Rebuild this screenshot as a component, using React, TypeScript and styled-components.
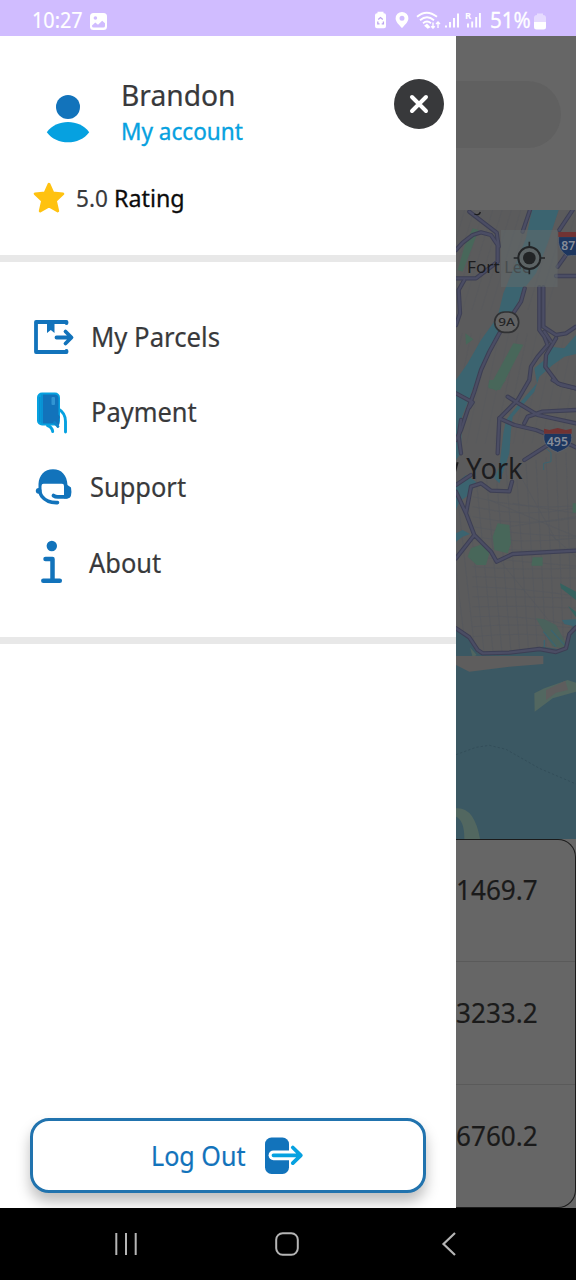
import React from "react";
import styled, { createGlobalStyle } from "styled-components";

const BLUE = "#1273bb";
const SKY = "#06a1e0";
const INK = "#38393b";

const GlobalStyle = createGlobalStyle`
  *, *::before, *::after { box-sizing: border-box; }
  body { margin: 0; background: #000; font-family: "Noto Sans", sans-serif; }
  svg { display: block; flex: none; }
`;

const Screen = styled.div`
  display: flex;
  flex-direction: column;
  width: 576px;
  height: 1280px;
  overflow: hidden;
`;

const StatusBar = styled.header`
  display: flex;
  align-items: center;
  justify-content: space-between;
  height: 36px;
  padding: 6px 30px 0 32px;
  background: #d0bcff;
`;

const StatusGroup = styled.div<{ $gap: number }>`
  display: flex;
  align-items: center;
  gap: ${(p) => p.$gap}px;
  height: 30px;
`;

const Label = styled.span<{
  $size: number;
  $width: number;
  $scale?: number;
  $color?: string;
  $stroke?: number;
}>`
  display: block;
  flex: none;
  width: ${(p) => p.$width}px;
  white-space: nowrap;
  font-size: ${(p) => p.$size}px;
  line-height: 36px;
  color: ${(p) => p.$color ?? INK};
  -webkit-text-stroke: ${(p) => p.$stroke ?? 0.2}px currentColor;
  transform: scaleX(${(p) => p.$scale ?? 1});
  transform-origin: left center;
`;

const StatusText = styled(Label)`
  line-height: 28px;
  padding-bottom: 2px;
`;

const Body = styled.main`
  display: flex;
  height: 1172px;
`;

const Drawer = styled.aside`
  display: flex;
  flex-direction: column;
  width: 456px;
  background: #fff;
  overflow: hidden;
`;

const Profile = styled.section`
  height: 226px;
  border-bottom: 7px solid #e8e8e8;
  padding: 40px 12px 0 33px;
`;

const ProfileTop = styled.div`
  display: flex;
  height: 92px;
`;

const AvatarSlot = styled.div`
  width: 88px;
  padding: 18px 0 0 13px;
`;

const Names = styled.div`
  flex: 1;
  padding-top: 1px;
`;

const CloseButton = styled.button`
  display: grid;
  place-items: center;
  width: 50px;
  height: 50px;
  margin: 3px 0 0;
  padding: 0;
  border: 0;
  border-radius: 50%;
  background: ${INK};
`;

const Rating = styled.div`
  display: flex;
  align-items: center;
  height: 60px;
`;

const Score = styled(Label)`
  margin-left: 11px;
`;

const Menu = styled.nav`
  height: 382px;
  padding: 37px 0 0 33px;
  border-bottom: 7px solid #e8e8e8;
`;

const MenuRow = styled.a<{ $indent: number }>`
  display: grid;
  grid-template-columns: ${(p) => p.$indent}px 1fr;
  align-items: center;
  height: 75.2px;
`;

const MenuLabel = styled(Label)`
  padding-top: 1px;
`;

const Footer = styled.footer`
  margin-top: auto;
  padding: 0 30px 15px;
`;

const LogOutButton = styled.button`
  display: flex;
  align-items: center;
  width: 396px;
  height: 75px;
  padding: 0 0 0 118px;
  border: 3px solid #2173ae;
  border-radius: 19px;
  background: #fff;
  box-shadow: 0 9px 14px rgba(0, 0, 0, 0.26);
  font-family: inherit;
  text-align: left;
`;

const Behind = styled.section`
  display: flex;
  flex-direction: column;
  width: 120px;
  background: #666;
  overflow: hidden;
`;

const SearchArea = styled.div`
  height: 174px;
  padding: 45px 15px 0 0;
`;

const SearchPill = styled.div`
  height: 67px;
  border-radius: 0 34px 34px 0;
  background: #606060;
`;

const MapFrame = styled.div`
  height: 629px;
`;

const Prices = styled.div`
  height: 369px;
  border: 1.5px solid #1b1b1b;
  border-left: 0;
  border-radius: 0 18px 18px 0;
  background: #666;
`;

const PriceRow = styled.div`
  display: flex;
  height: 123px;
  padding-top: 32px;
  &:first-child {
    height: 121px;
  }
  & + & {
    padding-top: 33px;
    border-top: 1px solid #5a5a5a;
  }
`;

const NavBar = styled.footer`
  display: flex;
  align-items: center;
  height: 72px;
  padding: 0 119px 0 114px;
  justify-content: space-between;
  background: #000;
`;

const HomeButton = styled.div`
  padding-right: 6px;
`;

const GalleryIcon = () => (
  <svg width="17" height="17" viewBox="0 0 17 17">
    <rect width="17" height="17" rx="3.5" fill="#fff" />
    <circle cx="5.4" cy="5" r="1.8" fill="#d0bcff" />
    <path d="M2 12.6 5.3 9.5 8 11.7 12.2 7.7 15 10.2V13q0 1.6-1.7 1.6H3.6Q2 14.6 2 13Z" fill="#d0bcff" />
  </svg>
);

const StatusIcons = () => (
  <svg width="110" height="22" viewBox="0 0 110 22">
    <path d="M3.500 3.300V1.800h6v1.500h.5q2 0 2 2v11q0 2-2 2H3q-2 0-2-2v-11q0-2 2-2Z" fill="#fff" />
    <path d="m4.200 9.500 2.300-2 2.300 2M3.800 11.500v2.300h1.700m2.200 0h1.700v-2.300" fill="none" stroke="#bca5ef" strokeWidth="1.300" />
    <path d="M28 2a6.400 6.400 0 0 1 6.400 6.400c0 3.500-4.200 7-6.400 9.700-2.200-2.700-6.400-6.200-6.400-9.700A6.400 6.400 0 0 1 28 2Zm0 3.800a2.500 2.500 0 1 0 0 5 2.500 2.500 0 0 0 0-5Z" fill="#fff" />
    <g fill="none" stroke="#fff" strokeWidth="1.800">
      <path d="M43 6.800q9.500-8.200 20 0" />
      <path d="M46 10.200q7-6 14 0" />
      <path d="M49 13.200q4-3.300 8 0" />
    </g>
    <path d="m53 13.500 3.500 3.800-2.800 1.500-3.600-3Z" fill="#fff" />
    <path d="M59 12.500v5.500m-1.800-1.800 1.800 1.800 1.800-1.800M64 18v-6m-2 2 2-2 2 2" fill="none" stroke="#fff" strokeWidth="1.400" />
    <path d="M72 17.500v-2m4 2V12m4 5.500V8m4 9.500V3.500" fill="none" stroke="#fff" strokeWidth="2" />
    <text x="91" y="8.800" fontSize="9.500" fontWeight="700" fill="#fff">R</text>
    <path d="M94 17.500v-4m4.200 4v-6m4 6V7m3.700 10.500V3" fill="none" stroke="#fff" strokeWidth="1.900" />
  </svg>
);

const BatteryIcon = () => (
  <svg width="12" height="17" viewBox="0 0 12 17">
    <path d="M3 2V.500h6V2q3 0 3 3v4H0V5q0-3 3-3Z" fill="#e6dbff" />
    <path d="M0 9h12v5q0 2.500-2.500 2.500h-7Q0 16.500 0 14Z" fill="#fff" />
  </svg>
);

const AvatarIcon = () => (
  <svg width="44" height="50" viewBox="0 0 44 50">
    <circle cx="22" cy="12.900" r="12" fill={BLUE} />
    <path d="M.8 38.200C10.500 24.700 33.500 24.700 43.200 38.200 33.500 51.700 10.500 51.700.8 38.200Z" fill={SKY} />
  </svg>
);

const CrossIcon = () => (
  <svg width="20" height="20" viewBox="0 0 20 20">
    <path d="m3 3 14 14M17 3 3 17" stroke="#fff" strokeWidth="4" strokeLinecap="round" />
  </svg>
);

const StarIcon = () => (
  <svg width="32" height="32" viewBox="0 0 32 32">
    <path
      d="m16 2.200 3.900 8.600 10 1-7.400 7 2.300 10.200L16 24l-8.800 5 2.300-10.200-7.400-7 10-1Z"
      fill="#ffc210"
      stroke="#ffc210"
      strokeWidth="2.800"
      strokeLinejoin="round"
    />
  </svg>
);

const ParcelIcon = () => (
  <svg width="42" height="36" viewBox="0 0 42 36">
    <g fill="none" stroke={BLUE} strokeWidth="3.800" strokeLinecap="round" strokeLinejoin="round">
      <path d="M33.500 4V3H3v30h30.500v-1" />
      <path d="M23.500 18.500H38M32.500 12.500l6 6-6 6" />
    </g>
    <path d="M14 3h7.500v11L17.800 11 14 14Z" fill={BLUE} />
  </svg>
);

const PaymentIcon = () => (
  <svg width="42" height="44" viewBox="0 0 42 44">
    <g fill="none" stroke={SKY} strokeWidth="2.900" strokeLinecap="round" strokeLinejoin="round">
      <path d="M25.500 19q7 4 7 12.500V42" />
      <path d="M14.500 35.500q4.500 1.500 5.200 6" />
    </g>
    <rect x="4" y="2.500" width="23" height="33" rx="5" fill={SKY} />
    <path d="M10 4.500h11.500q4 0 4 4v16l1.500 2.500-1 3 .5 4-2 2.500-2.500-3H10Z" fill={BLUE} />
    <path d="M6.800 7v25M9 4.500v29" stroke="#0d83c7" strokeWidth="1" />
    <rect x="18.500" y="7" width="3.500" height="8" rx="1" fill="#3195d3" />
    <path d="m21.500 32.500 3.500 4" fill="none" stroke="#0e84c9" strokeWidth="2.800" strokeLinecap="round" />
  </svg>
);

const SupportIcon = () => (
  <svg width="42" height="42" viewBox="0 0 42 42">
    <path
      d="M5.500 26V18C6 9 11.500 3.200 20 3.200S34 9 34.500 19l3.500 2.500q.8 4 0 8-.7 3-4 3h-3V20q0-2.200-2-2.200H10.500q-2 0-2 2.200v4.500q0 1-1.500 1.500Z"
      fill={BLUE}
    />
    <circle cx="5.700" cy="24.800" r="2.900" fill={BLUE} />
    <path d="M7 26q.6 3 2 4.500 5 6.500 15.500 6.100" fill="none" stroke={BLUE} strokeWidth="3.600" strokeLinecap="round" />
    <path d="M20.500 29.600q2 1.400 5 1.200h8" fill="none" stroke={BLUE} strokeWidth="3.800" strokeLinecap="round" />
  </svg>
);

const InfoIcon = () => (
  <svg width="42" height="44" viewBox="0 0 42 44">
    <circle cx="18.800" cy="6" r="5.200" fill={BLUE} />
    <path d="M12.500 19h7v20M10.300 40.700h16.500" fill="none" stroke={BLUE} strokeWidth="4.500" strokeLinecap="round" strokeLinejoin="round" />
  </svg>
);

const ExitIcon = () => (
  <svg width="40" height="38" viewBox="0 0 40 38">
    <rect x="1" y="0.500" width="24" height="36.500" rx="6.500" fill={BLUE} />
    <path d="M9.500 18.300H27" stroke="#fff" strokeWidth="9.800" strokeLinecap="round" />
    <path d="M9.500 18.300H36M28.800 10.500l8 7.800-8 7.800" fill="none" stroke={SKY} strokeWidth="3.800" strokeLinecap="round" strokeLinejoin="round" />
  </svg>
);

const streets = Array.from({ length: 15 }, (_, i) => i);

const CityMap = () => (
  <svg width="120" height="629" viewBox="0 30 360 1887">
    <rect y="30" width="360" height="1887" fill="#5b5b5c" />
    {/* street grid */}
    <g fill="none" stroke="#55585e" strokeWidth="2">
      {streets.map((i) => (
        <path key={`d${i}`} d={`M${i * 30 - 60} ${860 - i * 8} l${70 - i * 4} 560`} />
      ))}
      {streets.map((i) => (
        <path key={`h${i}`} d={`M50 ${890 + i * 30} q150 ${40 - i * 4} 310 ${i % 3 ? 4 : 28}`} />
      ))}
      {streets.map((i) => (
        <path key={`n${i}`} d={`M${i * 28 - 30} 30 l-90 300 M${i * 28 - 10} 400 l-70 330`} opacity=".6" />
      ))}
      <path d="M100 900l260 110M130 1080l180 220M280 1000l80 70M200 840l100 180M170 910l190 30M160 980l200-30" />
    </g>
    {/* parks */}
    <g fill="#48675a">
      <path d="M50 85 68 90 20 215 5 210 25 140Z" />
      <path d="M172 430 202 434 132 570 98 565Z" />
      <path d="M28 400 52 418 30 434Z" />
      <path d="M100 540h50l-28 32-26-10Z" />
      <path d="M125 970 160 975 165 1030 155 1060 115 1050 110 1010Z" />
      <path d="M45 1045 85 1030 100 1060 90 1095 62 1095 35 1070Z" />
      <path d="M230 1072h30v25h-34ZM350 910h10v28h-10Z" />
      <path d="M240 1255 265 1258 300 1275 330 1330 320 1345 290 1340Z" fill="#4a625c" />
    </g>
    <path d="M312 1150 360 1175V1200L315 1165ZM336 1218 360 1235V1252Z" fill="#35625f" />
    {/* rivers */}
    <g fill="#3b6470">
      <path d="M228 30H308L275 130 240 220 205 265 175 330 110 430 75 500 42 590 18 650 15 760 0 780V540L35 490 75 420 125 350 142 280 210 115Z" />
      <path d="M0 850 30 825 60 845 45 880 10 905 0 930Z" />
      <path d="M360 405 325 445 282 440 265 480 235 505 243 550 190 610 150 660 142 700 130 800 115 835 130 850 160 760 165 690 170 650 235 575 250 530 290 495 325 470 360 462Z" />
      <path d="M0 1000 20 990 42 1002 20 1010 0 1025Z" />
    </g>
    <path d="M270 745 285 758V785l-22 5v20" fill="none" stroke="#3b6470" strokeWidth="3" />
    {/* bay and barrier islands */}
    <path d="M0 1285 40 1318 66 1360 190 1355 260 1340 325 1350 340 1295 360 1262V1917H0Z" fill="#3b5863" />
    <path d="M318 1260 360 1258V1280L325 1272Z" fill="#3b6470" />
    <path d="M265 1320V1342M262 1295 300 1340M285 1290 330 1340" stroke="#3b6470" strokeWidth="4" />
    <path d="M42 1342 62 1365 50 1372Z" fill="#506560" />
    <path d="M0 1368H262V1392L160 1400 40 1415 0 1395Z" fill="#5e5d5d" />
    <path d="M235 1480 265 1465 335 1440 360 1448V1475L290 1495 236 1535Z" fill="#526760" />
    <path d="M270 1470 328 1442 336 1470 300 1478 270 1500Z" fill="#5e5d5d" />
    <path d="M0 1825Q55 1820 72 1917H25Q25 1860 0 1850Z" fill="#526760" />
    <path d="M0 1664 60 1642 100 1636 150 1648 250 1705 360 1752" fill="none" stroke="#2f4955" strokeWidth="2" strokeDasharray="7 6" />
    {/* highways */}
    <g fill="none" strokeLinejoin="round" strokeLinecap="round">
      {[
        { c: "#3d3f54", w: 13 },
        { c: "#4b4d64", w: 7 },
      ].map((s) => (
        <g key={s.c} stroke={s.c} strokeWidth={s.w}>
          <path d="M0 150 20 128 50 105 75 97 105 105 125 135V185L60 235H0M40 35 75 62 122 98 128 140" />
          <path d="M25 240 8 270 12 340 0 375" />
          <path d="M222 30 200 95M206 265 195 305 165 350 130 400 100 455 75 510 55 575 35 630 15 690 0 720" />
          <path d="M350 30 310 90M250 262V390L265 410 275 435 245 470 225 500 220 540 185 600 130 655 125 760M262 262V380L300 405 330 400 360 380" />
          <path d="M300 228H360M360 130 330 165 305 200M265 395 285 425M300 415 270 465 268 500 305 550 360 565" />
          <path d="M0 580 50 607 40 622M15 660 8 710 15 760M155 590 245 645 360 670M130 655 175 675 240 690 265 700M205 670 215 650 260 635 360 630M290 540 315 555 360 565" />
          <path d="M0 875 30 940 55 1005 105 1055 122 1085 170 1062 360 1052M55 1005 0 1075M30 940 45 860 75 850 105 872 160 874 168 845M0 855 45 825M205 780 260 745 300 720 345 735 360 742" />
          <path d="M0 1285 40 1312 65 1350 80 1360 160 1358 250 1347 300 1356 330 1345 340 1302 360 1282" />
        </g>
      ))}
    </g>
    <path d="M55 42q15 6 18-6" fill="none" stroke="#1c1c1e" strokeWidth="4" />
    {/* locate button */}
    <rect x="135" y="90" width="170" height="171" fill="#626a6c" opacity=".55" />
    {/* place names */}
    <g fill="#1c1c1e">
      <text x="33" y="219" fontSize="49" textLength="98" lengthAdjust="spacingAndGlyphs">Fort</text>
      <text x="145" y="219" fontSize="49" fill="#484c4e" textLength="80" lengthAdjust="spacingAndGlyphs">Lee</text>
      <text x="31" y="836" fontSize="88" textLength="169" lengthAdjust="spacingAndGlyphs">York</text>
    </g>
    <path d="M-8 834 5 787" stroke="#1c1c1e" strokeWidth="6" />
    <g fill="none" stroke="#222426" strokeWidth="6">
      <circle cx="220" cy="174" r="33" fill="#5c6365" />
      <path d="M220 125v16M220 207v16M173 174h14M253 174h14" strokeWidth="5" />
    </g>
    <circle cx="220" cy="174" r="19" fill="#222426" />
    {/* route shields */}
    <rect x="116" y="336" width="72" height="61" rx="30" fill="#646464" stroke="#303133" strokeWidth="5" />
    <text x="127" y="378" fontSize="34" fontWeight="500" fill="#242527" textLength="50" lengthAdjust="spacingAndGlyphs">9A</text>
    <g stroke="#656a72" strokeWidth="2">
      <path d="M308 110H362V167Q350 165 334 168 302 148 308 110Z" fill="#1d365f" />
      <path d="M307 96H362V111H307Z" fill="#713333" stroke="none" />
      <path d="M265 700H346C352 735 335 745 305 757 275 745 258 730 265 700Z" fill="#1d365f" />
      <path d="M264 686 280 690 305 684 330 690 347 686V701H264Z" fill="#713333" stroke="none" />
    </g>
    <g fill="#858c98" fontWeight="600">
      <text x="316" y="151" fontSize="38" textLength="42" lengthAdjust="spacingAndGlyphs">87</text>
      <text x="272" y="739" fontSize="39" textLength="64" lengthAdjust="spacingAndGlyphs">495</text>
    </g>
  </svg>
);

const RecentsIcon = () => (
  <svg width="24" height="24" viewBox="0 0 24 24">
    <path d="M2.300 1v22M12 1v22M21.700 1v22" stroke="#b5b5b5" strokeWidth="2" />
  </svg>
);

const HomeIcon = () => (
  <svg width="24" height="24" viewBox="0 0 24 24">
    <rect x="1.200" y="1.200" width="21.600" height="21.600" rx="6.500" fill="none" stroke="#b5b5b5" strokeWidth="2" />
  </svg>
);

const BackIcon = () => (
  <svg width="16" height="24" viewBox="0 0 16 24">
    <path d="M14 1 2.500 12 14 23" fill="none" stroke="#b5b5b5" strokeWidth="2.200" />
  </svg>
);

const menuItems = [
  { text: "My Parcels", Icon: ParcelIcon, indent: 58, width: 130, scale: 0.97 },
  { text: "Payment", Icon: PaymentIcon, indent: 58, width: 107, scale: 0.96 },
  { text: "Support", Icon: SupportIcon, indent: 57, width: 97, scale: 0.96 },
  { text: "About", Icon: InfoIcon, indent: 56, width: 72, scale: 0.96 },
];

const prices = ["1469.7", "3233.2", "6760.2"];

export default function App() {
  return (
    <Screen>
      <GlobalStyle />
      <StatusBar>
        <StatusGroup $gap={7}>
          <StatusText $size={21.5} $width={51} $scale={0.92} $color="#fff">10:27</StatusText>
          <GalleryIcon />
        </StatusGroup>
        <StatusGroup $gap={6}>
          <StatusIcons />
          <StatusText $size={21.5} $width={38} $scale={0.96} $color="#fff" $stroke={0.3}>51%</StatusText>
          <BatteryIcon />
        </StatusGroup>
      </StatusBar>
      <Body>
        <Drawer>
          <Profile>
            <ProfileTop>
              <AvatarSlot>
                <AvatarIcon />
              </AvatarSlot>
              <Names>
                <Label $size={28.5} $width={116} $scale={0.99}>Brandon</Label>
                <Label $size={24} $width={124} $scale={0.94} $color={SKY} $stroke={0.35}>My account</Label>
              </Names>
              <CloseButton aria-label="Close menu">
                <CrossIcon />
              </CloseButton>
            </ProfileTop>
            <Rating>
              <StarIcon />
              <Score $size={24} $width={38} $scale={0.94}>5.0</Score>
              <Label $size={24} $width={72} $scale={0.97} $color="#0c0c0c" $stroke={0.3}>Rating</Label>
            </Rating>
          </Profile>
          <Menu>
            {menuItems.map(({ text, Icon, indent, width, scale }) => (
              <MenuRow key={text} $indent={indent}>
                <Icon />
                <MenuLabel $size={26.5} $width={width} $scale={scale}>{text}</MenuLabel>
              </MenuRow>
            ))}
          </Menu>
          <Footer>
            <LogOutButton>
              <Label $size={27} $width={113} $scale={0.93} $color={BLUE}>Log Out</Label>
              <ExitIcon />
            </LogOutButton>
          </Footer>
        </Drawer>
        <Behind>
          <SearchArea>
            <SearchPill />
          </SearchArea>
          <MapFrame>
            <CityMap />
          </MapFrame>
          <Prices>
            {prices.map((price) => (
              <PriceRow key={price}>
                <Label $size={27.5} $width={82} $scale={0.95} $color="#1a1a1a">{price}</Label>
              </PriceRow>
            ))}
          </Prices>
        </Behind>
      </Body>
      <NavBar>
        <RecentsIcon />
        <HomeButton>
          <HomeIcon />
        </HomeButton>
        <BackIcon />
      </NavBar>
    </Screen>
  );
}
